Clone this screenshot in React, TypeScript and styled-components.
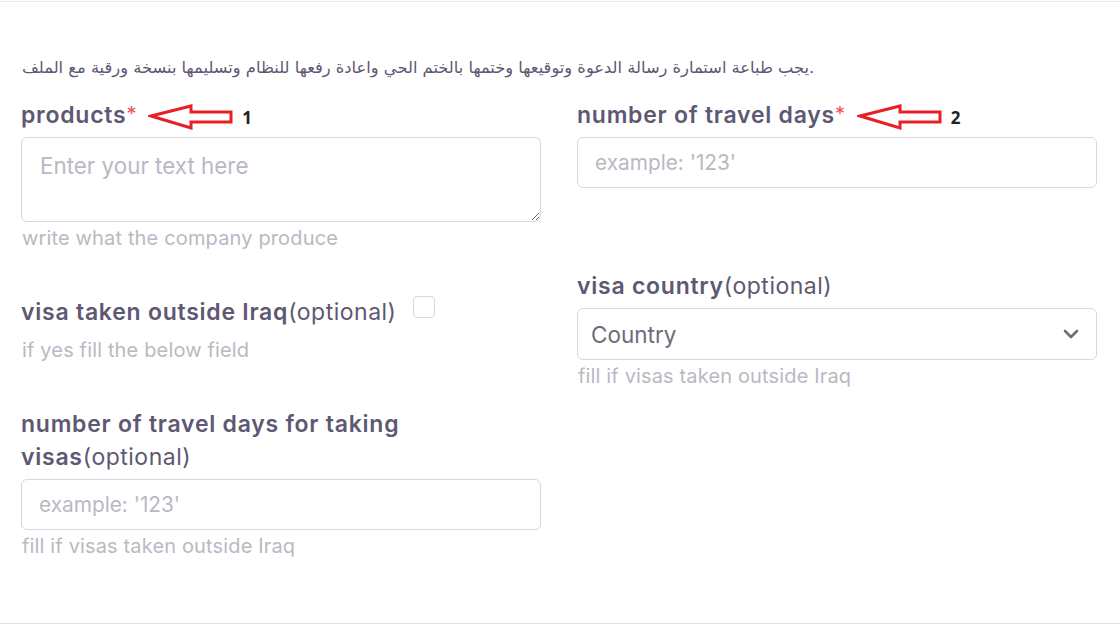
import React from "react";
import styled, { createGlobalStyle } from "styled-components";

const GlobalStyle = createGlobalStyle`
  html, body { margin: 0; padding: 0; background: #ffffff; }
  * { box-sizing: border-box; }
`;

const Page = styled.div`
  margin-top: 1px;
  border-top: 1px solid #ebe9f1;
  border-bottom: 1px solid #dde1e7;
  padding: 0 23px 0 21px;
  height: 623px;
  font-family: Inter, "Open Sans", sans-serif;
`;

const Note = styled.p`
  margin: 56px 0 0;
  height: 20px;
  font-family: "DejaVu Sans", "Liberation Sans", sans-serif;
  font-size: 16.3px;
  line-height: 20px;
  color: #5e5873;
  padding-left: 1px;
  white-space: nowrap;
`;

const Row = styled.div<{ $align?: string; $mt: number }>`
  display: grid;
  grid-template-columns: 520px 520px;
  column-gap: 36px;
  align-items: ${(p) => p.$align || "start"};
  margin-top: ${(p) => p.$mt}px;
`;

const Field = styled.div`
  display: flex;
  flex-direction: column;
`;

const Label = styled.label`
  display: flex;
  align-items: center;
  height: 33px;
  font-size: 23px;
  line-height: 33px;
  font-weight: 600;
  color: #5e5873;
  letter-spacing: 0.75px;
  margin-bottom: 5px;
`;

const WrapLabel = styled.label`
  display: block;
  font-size: 23px;
  line-height: 33px;
  font-weight: 600;
  color: #5e5873;
  letter-spacing: 0.75px;
  margin-bottom: 5px;
  max-width: 430px;
`;

const WrapFirst = styled.span`
  display: block;
`;

const Optional = styled.span`
  font-weight: 400;
  letter-spacing: 0.5px;
`;

const Star = styled.span`
  color: #ea5455;
  font-weight: 400;
  font-size: 20px;
  align-self: flex-start;
  line-height: 30px;
`;

const Annot = styled.span`
  display: inline-flex;
  align-items: center;
  margin-left: 11px;
  gap: 6px;
  font-family: "Open Sans", "Liberation Sans", sans-serif;
  font-weight: 700;
  font-size: 17px;
  color: #222;
  letter-spacing: 0;
  padding-top: 3px;
`;

const TextArea = styled.textarea`
  display: block;
  width: 520px;
  height: 85px;
  border: 1px solid #d8d6de;
  border-radius: 6px;
  padding: 14px 18px;
  font-family: inherit;
  font-size: 22.4px;
  line-height: 28px;
  color: #6e6b7b;
  outline: none;
  &::placeholder { color: #b9b9c3; }
`;

const Input = styled.input`
  display: block;
  width: 520px;
  height: 51px;
  border: 1px solid #d8d6de;
  border-radius: 6px;
  padding: 0 17px;
  font-family: inherit;
  font-size: 20.8px;
  color: #6e6b7b;
  outline: none;
  &::placeholder { color: #b9b9c3; }
`;

const Select = styled.div`
  display: flex;
  align-items: center;
  justify-content: space-between;
  width: 520px;
  height: 52px;
  border: 1px solid #d8d6de;
  border-radius: 6px;
  padding: 0 17px 0 13px;
  font-size: 22.5px;
  color: #6e6b7b;
`;

const Help = styled.div`
  font-size: 20px;
  line-height: 24px;
  color: #b9b9c3;
  margin-top: 4px;
  padding-left: 1px;
  letter-spacing: 0.15px;
`;

const CheckLine = styled.div`
  display: flex;
  align-items: center;
  gap: 16px;
`;

const CheckBox = styled.span`
  display: inline-block;
  width: 22px;
  height: 22px;
  border: 1px solid #d8d6de;
  border-radius: 4px;
  margin-top: -17px;
`;

const Arrow = () => (
  <svg width="88" height="28" viewBox="0 0 88 28" fill="none">
    <path
      d="M3 13 L43 3 L43 9 L83 9 L83 19 L43 19 L43 25 Z"
      stroke="#e81f25"
      strokeWidth="3"
      strokeLinejoin="miter"
    />
  </svg>
);

const Chevron = () => (
  <svg width="16" height="10" viewBox="0 0 16 10" fill="none">
    <path d="M2 2 L8 8 L14 2" stroke="#6e6b7b" strokeWidth="2.6" strokeLinecap="round" strokeLinejoin="round" />
  </svg>
);

export default function App() {
  return (
    <>
      <GlobalStyle />
      <Page>
        <Note>يجب طباعة استمارة رسالة الدعوة وتوقيعها وختمها بالختم الحي واعادة رفعها للنظام وتسليمها بنسخة ورقية مع الملف.</Note>
        <Row $mt={21}>
          <Field>
            <Label>
              <span>products</span>
              <Star>*</Star>
              <Annot>
                <Arrow />1
              </Annot>
            </Label>
            <TextArea placeholder="Enter your text here" />
            <Help>write what the company produce</Help>
          </Field>
          <Field>
            <Label>
              <span>number of travel days</span>
              <Star>*</Star>
              <Annot>
                <Arrow />2
              </Annot>
            </Label>
            <Input placeholder="example: '123'" />
          </Field>
        </Row>
        <Row $mt={20} $align="center">
          <Field>
            <CheckLine>
              <Label as="span">
                <span>visa taken outside Iraq</span>
                <Optional>(optional)</Optional>
              </Label>
              <CheckBox />
            </CheckLine>
            <Help>if yes fill the below field</Help>
          </Field>
          <Field>
            <Label>
              <span>visa country</span>
              <Optional>(optional)</Optional>
            </Label>
            <Select>
              <span>Country</span>
              <Chevron />
            </Select>
            <Help>fill if visas taken outside Iraq</Help>
          </Field>
        </Row>
        <Row $mt={20}>
          <Field>
            <WrapLabel>
              <WrapFirst>number of travel days for taking</WrapFirst>
              <span>visas</span>
              <Optional>(optional)</Optional>
            </WrapLabel>
            <Input placeholder="example: '123'" />
            <Help>fill if visas taken outside Iraq</Help>
          </Field>
        </Row>
      </Page>
    </>
  );
}
